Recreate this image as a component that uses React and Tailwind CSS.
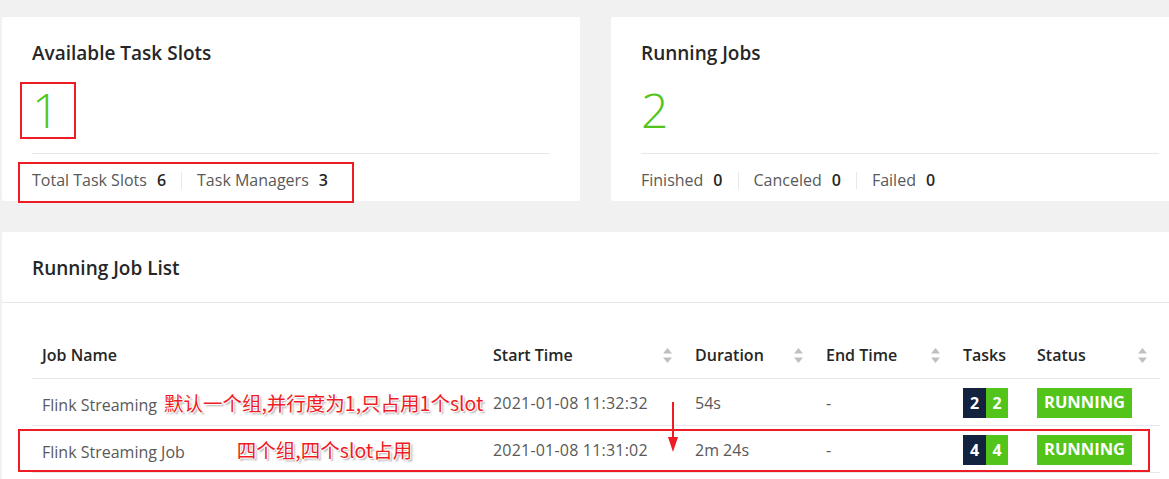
import React from "react";

const green = "bg-[#52c41a]";

function SortIcon() {
  return (
    <svg width="11" height="17" viewBox="0 0 11 17" className="shrink-0">
      <path d="M5.5 1 L10 6.5 L1 6.5 Z" fill="#bfbfbf" />
      <path d="M1 10.5 L10 10.5 L5.5 16 Z" fill="#bfbfbf" />
    </svg>
  );
}

function Stat({ label, value }) {
  return (
    <span className="flex items-center">
      <span>{label}</span>
      <span className="ml-[10px] font-semibold text-[#262626]">{value}</span>
    </span>
  );
}

function Sep() {
  return <span className="mx-[15px] inline-block w-px h-[17px] bg-[#e8e8e8]" />;
}

function SummaryCard({ title, value, stats }) {
  return (
    <div className="w-[578px] h-[184px] bg-white rounded-[2px] px-[30px] pt-[22px]">
      <div className="text-[19px] leading-[28px] font-semibold text-[#262626]">
        {title}
      </div>
      <div className="mt-[15px] text-[48px] leading-[56px] font-light text-[#52c41a]">
        {value}
      </div>
      <div className="mt-[15px] border-t border-[#e8e8e8] pt-[14px] flex items-center text-[16px] leading-[24px] text-[#595959]">
        {stats.map((s, i) => (
          <React.Fragment key={s.label}>
            {i > 0 && <Sep />}
            <Stat label={s.label} value={s.value} />
          </React.Fragment>
        ))}
      </div>
    </div>
  );
}

const note =
  "font-['Noto_Sans_CJK_SC',sans-serif] font-normal text-[19.5px] text-[#f01c24] [text-shadow:1px_0_0_#fff,-1px_0_0_#fff,0_1px_0_#fff,0_-1px_0_#fff,2px_2px_2px_rgba(0,0,0,0.35)]";

const jobs = [
  {
    name: "Flink Streaming",
    note: "默认一个组,并行度为1,只占用1个slot",
    noteGap: "ml-[7px]",
    start: "2021-01-08 11:32:32",
    duration: "54s",
    tasks: 2,
  },
  {
    name: "Flink Streaming Job",
    note: "四个组,四个slot占用",
    noteGap: "ml-[52px]",
    start: "2021-01-08 11:31:02",
    duration: "2m 24s",
    tasks: 4,
  },
];

const columns = [
  { title: "Job Name", width: "w-[451px]", sort: false },
  { title: "Start Time", width: "w-[202px]", sort: true },
  { title: "Duration", width: "w-[131px]", sort: true },
  { title: "End Time", width: "w-[137px]", sort: true },
  { title: "Tasks", width: "w-[74px]", sort: false },
  { title: "Status", width: "w-[133px]", sort: true },
];

const cell = "h-[47px] px-[10px] pt-[2px] border-b border-[#e8e8e8]";

export default function App() {
  return (
    <div className="relative w-[1169px] h-[479px] overflow-hidden bg-[#f1f1f1] font-['Open_Sans','Noto_Sans_CJK_SC',sans-serif]">
      <div className="w-[1200px] pt-[17px] pl-[2px]">
        {/* Top cards */}
        <div className="flex gap-[31px]">
          <SummaryCard
            title="Available Task Slots"
            value="1"
            stats={[
              { label: "Total Task Slots", value: 6 },
              { label: "Task Managers", value: 3 },
            ]}
          />
          <SummaryCard
            title="Running Jobs"
            value="2"
            stats={[
              { label: "Finished", value: 0 },
              { label: "Canceled", value: 0 },
              { label: "Failed", value: 0 },
            ]}
          />
        </div>

        {/* Running job list */}
        <div className="mt-[31px] w-[1188px] bg-white rounded-[2px]">
          <div className="h-[71px] px-[30px] pt-[2px] flex items-center border-b border-[#e8e8e8] text-[19px] font-semibold text-[#262626]">
            Running Job List
          </div>
          <div className="px-[30px] pt-[28px] pb-[20px]">
            <table className="table-fixed w-[1128px] border-collapse">
              <thead>
                <tr>
                  {columns.map((c) => (
                    <th
                      key={c.title}
                      className={`${c.width} h-[47px] pl-[10px] pr-[12px] pt-[2px] text-left text-[16px] font-semibold text-[#262626] border-b border-[#e8e8e8]`}
                    >
                      <div className="flex items-center justify-between">
                        <span>{c.title}</span>
                        {c.sort && <SortIcon />}
                      </div>
                    </th>
                  ))}
                </tr>
              </thead>
              <tbody className="text-[16px] text-[#595959]">
                {jobs.map((job) => (
                  <tr key={job.start}>
                    <td className={`${cell} whitespace-nowrap`}>
                      {job.name}
                      <span className={`${job.noteGap} ${note}`}>{job.note}</span>
                    </td>
                    <td className={`${cell} whitespace-nowrap tracking-[0.2px]`}>
                      {job.start}
                    </td>
                    <td className={cell}>{job.duration}</td>
                    <td className={cell}>-</td>
                    <td className={cell}>
                      <div className="flex h-[30px] text-white font-bold">
                        <span className="w-[23px] flex items-center justify-center bg-[#13233f]">
                          {job.tasks}
                        </span>
                        <span className={`w-[22px] flex items-center justify-center ${green}`}>
                          {job.tasks}
                        </span>
                      </div>
                    </td>
                    <td className={cell}>
                      <span className={`inline-flex items-center h-[30px] px-[7px] ${green} text-white text-[16.5px] font-bold`}>
                        RUNNING
                      </span>
                    </td>
                  </tr>
                ))}
              </tbody>
            </table>
          </div>
        </div>
      </div>

      {/* Annotations */}
      <div className="absolute left-[20px] top-[82px] w-[56px] h-[57px] border-2 border-[#ee1c25]" />
      <div className="absolute left-[18px] top-[162px] w-[336px] h-[41px] border-2 border-[#ee1c25]" />
      <div className="absolute left-[18px] top-[429px] w-[1132px] h-[43px] border-2 border-[#ee1c25]" />
      <svg className="absolute left-[666px] top-[401px]" width="14" height="52" viewBox="0 0 14 52">
        <line x1="7" y1="1" x2="7" y2="38" stroke="#ee1c25" strokeWidth="2" />
        <path d="M2 36 L12 36 L7 51 Z" fill="#ee1c25" />
      </svg>
    </div>
  );
}
